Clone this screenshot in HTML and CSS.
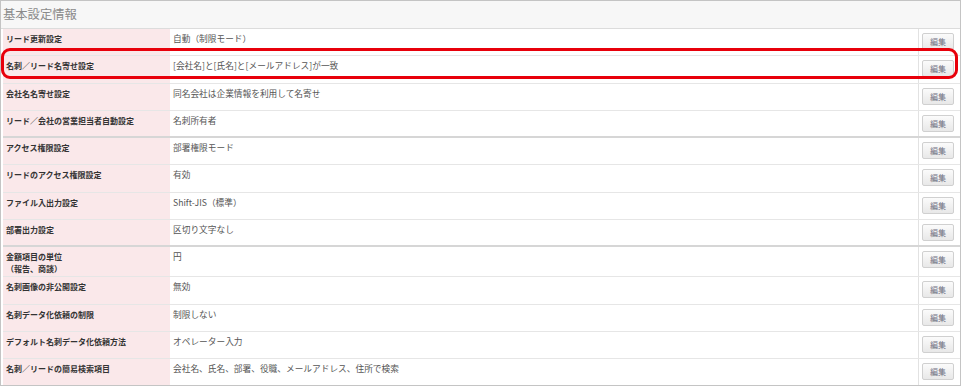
FILE: index.html
```html
<!DOCTYPE html>
<html lang="ja">
<head>
<meta charset="utf-8">
<title>基本設定情報</title>
<link rel="stylesheet" href="styles.css">
</head>
<body>
<div class="panel">
  <div class="panel-head">基本設定情報</div>
  <div class="rows">
    <div class="row"><div class="label">リード更新設定</div><div class="value">自動（制限モード）</div><div class="action"><button class="btn">編集</button></div></div>
    <div class="row"><div class="label">名刺／リード名寄せ設定</div><div class="value">[会社名]と[氏名]と[メールアドレス]が一致</div><div class="action"><button class="btn">編集</button></div></div>
    <div class="row"><div class="label">会社名名寄せ設定</div><div class="value">同名会社は企業情報を利用して名寄せ</div><div class="action"><button class="btn">編集</button></div></div>
    <div class="row group-end"><div class="label">リード／会社の営業担当者自動設定</div><div class="value">名刺所有者</div><div class="action"><button class="btn">編集</button></div></div>
    <div class="row"><div class="label">アクセス権限設定</div><div class="value">部署権限モード</div><div class="action"><button class="btn">編集</button></div></div>
    <div class="row"><div class="label">リードのアクセス権限設定</div><div class="value">有効</div><div class="action"><button class="btn">編集</button></div></div>
    <div class="row"><div class="label">ファイル入出力設定</div><div class="value">Shift-JIS（標準）</div><div class="action"><button class="btn">編集</button></div></div>
    <div class="row group-end"><div class="label">部署出力設定</div><div class="value">区切り文字なし</div><div class="action"><button class="btn">編集</button></div></div>
    <div class="row double"><div class="label">金額項目の単位<br>（報告、商談）</div><div class="value">円</div><div class="action"><button class="btn">編集</button></div></div>
    <div class="row"><div class="label">名刺画像の非公開設定</div><div class="value">無効</div><div class="action"><button class="btn">編集</button></div></div>
    <div class="row"><div class="label">名刺データ化依頼の制限</div><div class="value">制限しない</div><div class="action"><button class="btn">編集</button></div></div>
    <div class="row"><div class="label">デフォルト名刺データ化依頼方法</div><div class="value">オペレーター入力</div><div class="action"><button class="btn">編集</button></div></div>
    <div class="row last"><div class="label">名刺／リードの簡易検索項目</div><div class="value">会社名、氏名、部署、役職、メールアドレス、住所で検索</div><div class="action"><button class="btn">編集</button></div></div>
  </div>
  <div class="highlight"></div>
</div>
</body>
</html>
```

FILE: styles.css
```css
* { box-sizing: border-box; }
html, body { margin: 0; padding: 0; background: #ffffff; }
body {
  font-family: "Noto Sans CJK JP", "Noto Sans", sans-serif;
  width: 962px;
  height: 386px;
  overflow: hidden;
}
.panel {
  position: relative;
  width: 961px;
  height: 386px;
  border: 1px solid #c4c4c4;
  background: #ffffff;
  display: flex;
  flex-direction: column;
}
.panel-head {
  height: 28px;
  flex: none;
  background: #f7f7f7;
  border-bottom: 1px solid #dcdcdc;
  color: #8a8a8a;
  font-size: 12.3px;
  line-height: 26px;
  padding-left: 2px;
}
.rows {
  flex: 1;
  padding-left: 2px;
  display: flex;
  flex-direction: column;
}
.row {
  display: flex;
  height: 27.3px;
  flex: none;
  border-bottom: 1px solid #e6e6e6;
}
.row.group-end { border-bottom: 2px solid #d6d6d6; }
.row.double { height: 30px; }
.row.last { border-bottom: none; flex: 1; }
.label {
  width: 167px;
  flex: none;
  background: #fae8ea;
  color: #333333;
  font-weight: bold;
  font-size: 8px;
  line-height: 11.5px;
  padding: 4px 0 0 3px;
}
.value {
  flex: 1;
  color: #555555;
  font-size: 8.7px;
  line-height: 11px;
  padding: 4px 0 0 3px;
  border-right: 1px solid #e2e2e2;
}
.action {
  width: 41px;
  flex: none;
  padding: 4px 0 0 3px;
}
.btn {
  display: block;
  width: 32px;
  height: 17px;
  margin: 0;
  padding: 0;
  border: 1px solid #d0d0d0;
  border-radius: 2px;
  background: linear-gradient(#fbfbfb, #e8e8e8);
  color: #6e6e80;
  font-family: "Noto Sans CJK JP", sans-serif;
  font-size: 8px;
  line-height: 15px;
  text-align: center;
}
.highlight {
  position: absolute;
  top: 47px;
  left: 0;
  width: 957px;
  height: 31px;
  border: 3px solid #e8000b;
  border-radius: 9px;
  pointer-events: none;
}
```
